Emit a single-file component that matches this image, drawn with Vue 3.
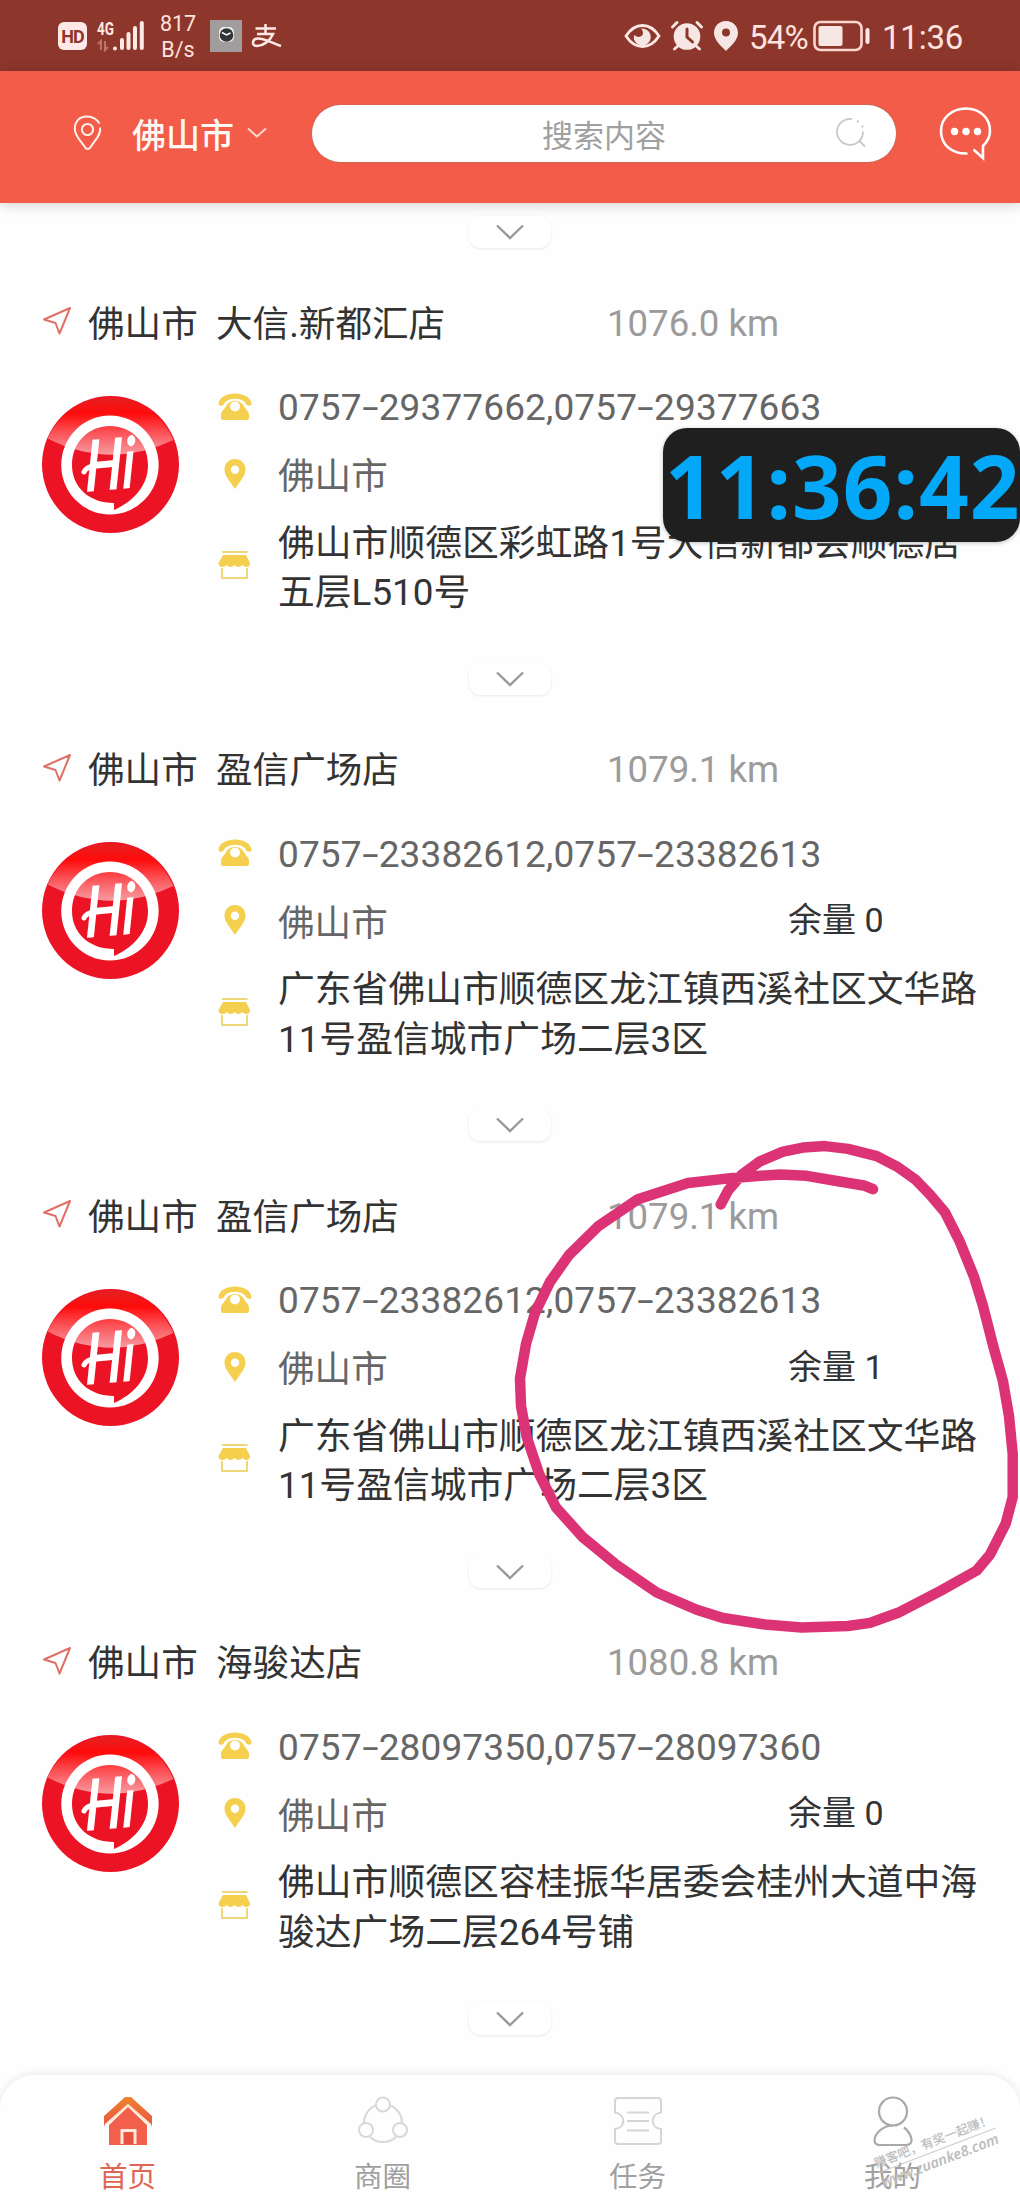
<script setup>
const stores = [
  { name: '大信.新都汇店', distance: '1076.0 km', phone: '0757-29377662,0757-29377663', stock: null, address: ['佛山市顺德区彩虹路1号大信新都会顺德店', '五层L510号'] },
  { name: '盈信广场店', distance: '1079.1 km', phone: '0757-23382612,0757-23382613', stock: 0, address: ['广东省佛山市顺德区龙江镇西溪社区文华路', '11号盈信城市广场二层3区'] },
  { name: '盈信广场店', distance: '1079.1 km', phone: '0757-23382612,0757-23382613', stock: 1, address: ['广东省佛山市顺德区龙江镇西溪社区文华路', '11号盈信城市广场二层3区'] },
  { name: '海骏达店', distance: '1080.8 km', phone: '0757-28097350,0757-28097360', stock: 0, address: ['佛山市顺德区容桂振华居委会桂州大道中海', '骏达广场二层264号铺'] },
]
const phoneParts = (phone) => phone.split(/(-)/)
</script>

<template>
  <div class="screen">
    <div class="status">
      <div class="status-left">
        <span class="hd">HD</span>
        <svg class="signal" width="50" height="32" viewBox="0 0 50 32">
          <text x="0" y="15" font-size="18" font-weight="700" textLength="17" lengthAdjust="spacingAndGlyphs" fill="#ffe9e6">4G</text>
          <path d="M4 30V21L1 24M8 21V30L11 27" stroke="#b9756c" stroke-width="2" fill="none" />
          <path d="M18 28.5v0M25 28V20M31.5 28V14M38 28V8M44.800 28V3" stroke="#ffe9e6" stroke-width="4" stroke-linecap="round" />
        </svg>
        <span class="speed"><span>817</span><span>B/s</span></span>
        <svg class="app-icon" width="32" height="32" viewBox="0 0 32 32">
          <rect width="32" height="32" fill="#a09d9c" />
          <rect x="9" y="7" width="15" height="15" rx="5" fill="#eee" />
          <circle cx="16.500" cy="15" r="6.800" fill="#303436" />
          <path d="M12 12.500l4.500 2.500 4-2" stroke="#fff" stroke-width="1.500" fill="none" />
        </svg>
        <svg class="pay-icon" width="32" height="26" viewBox="0 0 32 26" fill="none" stroke="#ffe9e6" stroke-width="2.500">
          <path d="M4.500 5.500H25M14.500 1V11M6 11H22C19 18 12 23 6 23C0 23 1 15.500 7 15.500C14 15.500 21 20 30 23" />
        </svg>
      </div>
      <div class="status-right">
        <svg width="37" height="28" viewBox="0 0 37 28">
          <path d="M2 14C11 0 26 0 35 14C26 28 11 28 2 14Z" fill="none" stroke="#ffe9e6" stroke-width="2.800" />
          <path d="M18 6.500A8.500 8.500 0 1 1 10 13Q15 17 18.500 13Q20 9.500 17 6.500Z" fill="#f6e7e5" />
        </svg>
        <svg class="alarm" width="32" height="30" viewBox="0 0 32 30">
          <circle cx="16" cy="15.500" r="13.300" fill="#f6e7e5" />
          <path d="M1.500 6L6 1.500M30.500 6L26 1.500M3.500 28L8 24M28.500 28L24 24" stroke="#f6e7e5" stroke-width="3" stroke-linecap="round" />
          <path d="M16 8V16L21.500 21" fill="none" stroke="#8d362b" stroke-width="3" stroke-linecap="round" />
        </svg>
        <svg class="gps" width="24" height="30" viewBox="0 0 24 30">
          <path fill-rule="evenodd" d="M12 0C5 0 0 5 0 12C0 19 7 25 12 30C17 25 24 19 24 12C24 5 19 0 12 0ZM12 7.500A4 4 0 1 1 12 15.500A4 4 0 0 1 12 7.500Z" fill="#f6e7e5" />
        </svg>
        <span class="percent">54%</span>
        <svg class="battery" width="57" height="32" viewBox="0 0 57 32">
          <rect x="1.500" y="2" width="47" height="28" rx="6" fill="none" stroke="#ffd5cf" stroke-width="2.600" />
          <rect x="5.500" y="6" width="24" height="20" rx="2" fill="#f6e7e5" />
          <rect x="52.500" y="8" width="4" height="16" rx="2" fill="#ffe9e6" />
        </svg>
        <span class="time">11:36</span>
      </div>
    </div>

    <header class="header">
      <svg class="head-pin" width="30" height="36" viewBox="0 0 30 36" fill="none" stroke="#fff0ea" stroke-width="2">
        <path d="M26.500 8.500C21 -1 6 -1 2.500 9C-1 19 9 27 12.500 33Q14.500 35 17 33C20 27 29 20 27 12.500" />
        <circle cx="14.500" cy="14.500" r="5.600" />
      </svg>
      <span class="head-city">佛山市</span>
      <svg class="head-arrow" width="20" height="12" viewBox="0 0 20 12"><path d="M1 1.500L10 9.500L19 1.500" fill="none" stroke="#fbd9d0" stroke-width="2" /></svg>
      <div class="search">
        <span>搜索内容</span>
        <svg width="32" height="32" viewBox="0 0 32 32" fill="none" stroke="#c8c8c8" stroke-width="1.800">
          <path d="M17 2A13 13 0 1 0 28 14.500M24.500 24L30 29.500" />
          <path d="M22 4.500h2M26.500 9.500h2" />
        </svg>
      </div>
      <svg class="chat" width="54" height="54" viewBox="0 0 54 54">
        <path d="M28.500 47.500C13 48 2 39 2 25C2 12 13 2.500 27 2.500C41 2.500 51 12 51 25C51 32 48 36 44 40V52L34.500 43.500" fill="none" stroke="#fff" stroke-width="2.600" />
        <circle cx="15.500" cy="25.500" r="3.700" fill="#fff" /><circle cx="27" cy="25.500" r="3.700" fill="#fff" /><circle cx="38.500" cy="25.500" r="3.700" fill="#fff" />
      </svg>
    </header>

    <main class="list">
      <div class="pill"><svg width="30" height="16" viewBox="0 0 30 16"><path d="M2 1.500L15 14L28 1.500" fill="none" stroke="#999" stroke-width="2.400" /></svg></div>
      <section v-for="(store, i) in stores" :key="i" class="card">
        <div class="title">
          <svg width="30" height="30" viewBox="0 0 30 30"><path d="M2 13.500L28 2L17.500 27.500L13.500 17Z" fill="none" stroke="#df7065" stroke-width="2" stroke-linejoin="round" /></svg>
          <span class="city">佛山市</span>
          <span class="name">{{ store.name }}</span>
          <span class="distance">{{ store.distance }}</span>
        </div>
        <div class="body">
          <svg class="logo" width="137" height="137" viewBox="0 0 137 137">
            <defs>
              <linearGradient :id="'gloss' + i" x1="0" y1="0" x2="0" y2="1">
                <stop offset="0" stop-color="#e52020" /><stop offset="0.280" stop-color="#ff0b0b" /><stop offset="0.600" stop-color="#fb5055" /><stop offset="1" stop-color="#f79aa0" />
              </linearGradient>
            </defs>
            <circle cx="68.500" cy="68.500" r="68.500" fill="#ec1325" />
            <path d="M5.500 42.500A68.500 68.500 0 0 1 131.500 44Q68 74 5.500 42.500Z" :fill="`url(#gloss${i})`" />
            <path fill-rule="evenodd" fill="#fff" d="M68 19.500A48.700 49.500 0 1 1 67.900 118.500A48.700 49.500 0 1 1 68 19.500ZM68 30C47 30 30 46 30 69C30 91 47 107 72 107L72 114C90 106 106 91 106 69C106 46 89 30 68 30Z" />
            <text class="hi" transform="translate(43 96) rotate(-5) skewX(-6)" textLength="50" lengthAdjust="spacingAndGlyphs">Hi</text>
            <path d="M42 76Q44 71 54 69" fill="none" stroke="#fff" stroke-width="5" stroke-linecap="round" />
          </svg>
          <div class="info">
            <div class="row">
              <svg class="ico" width="34" height="28" viewBox="0 0 34 28" fill="#f5d04f">
                <path d="M.5 11C1 4 9 .5 17 .5S33 4 33.500 11C33 14 27.500 13 27 9C22 4.500 12 4.500 7 9C6.500 13 1 14 .5 11Z" />
                <path fill-rule="evenodd" d="M9 11.500Q17 4 25 11.500C27 16 31 18 31 22V25Q31 27 29 27H5Q3 27 3 25V22C3 18 7 16 9 11.500ZM17 8.500A5 5 0 1 0 17 18.500A5 5 0 0 0 17 8.500Z" />
              </svg>
              <span class="phone"><span v-for="(part, p) in phoneParts(store.phone)" :key="p" :class="{ dash: part === '-' }">{{ part }}</span></span>
            </div>
            <div class="row">
              <svg class="ico" width="34" height="30" viewBox="0 0 34 30"><path fill-rule="evenodd" d="M17 0C11 0 6.500 4.500 6.500 10.500C6.500 17 12 22 17 30C22 22 27.500 17 27.500 10.500C27.500 4.500 23 0 17 0ZM17 6.500A4.200 4.200 0 1 1 17 14.900A4.200 4.200 0 0 1 17 6.500Z" fill="#f5d04f" /></svg>
              <span class="area">佛山市</span>
              <span v-if="store.stock !== null" class="stock">余量 {{ store.stock }}</span>
            </div>
            <div class="row address">
              <svg class="ico shop" width="34" height="28" viewBox="0 0 34 28">
                <path d="M4 1H29.500" stroke="#efd778" stroke-width="2" />
                <path d="M5 4H28L32 12Q32 16 28.500 16Q25.500 16 24.500 14Q20.500 18 16.500 14Q12.500 18 8.500 14Q7.500 16 4.500 16Q.5 16 .5 12Z" fill="#f5d04f" />
                <path d="M4 17V27H29V17" fill="none" stroke="#efd778" stroke-width="2" />
              </svg>
              <div class="lines"><div v-for="line in store.address" :key="line">{{ line }}</div></div>
            </div>
          </div>
        </div>
        <div class="pill"><svg width="30" height="16" viewBox="0 0 30 16"><path d="M2 1.500L15 14L28 1.500" fill="none" stroke="#999" stroke-width="2.400" /></svg></div>
      </section>
    </main>

    <nav class="tabs">
      <div class="tab active">
        <svg width="50" height="50" viewBox="0 0 50 50">
          <defs><linearGradient id="roof" x1="0" y1="0" x2="0" y2="1"><stop offset="0" stop-color="#ee8430" /><stop offset="1" stop-color="#e55543" /></linearGradient></defs>
          <path d="M22 1H28L49 20V30L25 9L1 30V20Z" fill="url(#roof)" />
          <path d="M6 29L25 11L44 29V49H6Z" fill="#f2604b" />
          <path d="M2 29L25 9L48 29" fill="none" stroke="#ffe2ca" stroke-width="1.800" />
          <path d="M19 48V34.500H32V48" fill="#e9513f" stroke="#ffe9dc" stroke-width="3" />
        </svg>
        <span>首页</span>
      </div>
      <div class="tab">
        <svg width="50" height="50" viewBox="0 0 50 50" fill="none" stroke="#d8d8d8" stroke-width="2">
          <circle cx="25" cy="27" r="19" />
          <g fill="#fefefe"><circle cx="25" cy="8.500" r="7" /><circle cx="8" cy="34" r="7" /><circle cx="42" cy="34" r="7" /></g>
        </svg>
        <span>商圈</span>
      </div>
      <div class="tab">
        <svg width="50" height="50" viewBox="0 0 50 50" fill="none" stroke="#d5d5d5" stroke-width="2">
          <path d="M5 2H45Q48 2 48 5V16.500C37 18 37 32 48 33V45Q48 48 45 48H5Q2 48 2 45V33C13 32 13 18 2 16.500V5Q2 2 5 2Z" />
          <path d="M14 16.500H36M14 25H36M14 34.500H36" />
        </svg>
        <span>任务</span>
      </div>
      <div class="tab mine">
        <svg width="50" height="50" viewBox="0 0 50 50" fill="none" stroke="#a9a9a9" stroke-width="2.200">
          <circle cx="25" cy="15.500" r="14" />
          <path d="M25 29.500C14 29.500 7 38 6.500 44Q6.500 49 12 49H38Q44 49 43.500 43Q42 36 36 31.500" />
        </svg>
        <span>我的</span>
      </div>
    </nav>

    <div class="clock">11:36:42</div>
    <svg class="scribble" width="1020" height="2210" viewBox="0 0 1020 2210">
      <path d="M720.700 1204.400L728.300 1190.300L741.700 1174.800L760 1161.300L783 1151.700L803 1147.600L825 1146.100L848 1148.900L876.700 1156.200L898 1167.200L915 1179.200L930 1194.700L945 1212.300L959.300 1240.600L974 1276.700L983 1306L993 1345.200L1003 1381.400L1009 1416.200L1012.700 1453.700V1497.100L1005.700 1523.700L990 1554.700L976.700 1570.500L940 1591.100L898 1612.800L870 1622.900L848 1626L801.700 1627.600L765 1624.500L723 1618L696.700 1609.700L656.700 1592.500L616.700 1565L583 1537.400L556 1507.500L539.300 1474.400L526.700 1436.900L521 1405.900L520 1378.300L526 1343.900L535 1312.900L550 1281.900L569 1255L598 1226.400L638 1199.200L688 1183L733 1177.900L780 1174.400L806.700 1175.800L836.700 1181L865 1185.800L873 1189.200" />
    </svg>
    <div class="watermark"><div class="slogan">赚客吧，有奖一起赚！</div><div class="site">www.zuanke8.com</div></div>
  </div>
</template>

<style>
body { background: #fefefe; }
</style>

<style scoped>
.screen { position: relative; width: 1020px; height: 2210px; overflow: hidden; background: #fefefe; font-family: Roboto, "Noto Sans CJK SC", sans-serif; color: #333; display: flex; flex-direction: column; white-space: nowrap; }
svg { display: block; flex: none; overflow: visible; }
.status { height: 71px; flex: none; background: #8d362b; color: #ffe3df; display: flex; justify-content: space-between; align-items: center; }
.status-left, .status-right { display: flex; align-items: center; }
.status-left { padding-left: 58px; }
.hd { width: 29px; height: 28px; border-radius: 6px; background: #ffe9e6; color: #8d362b; font-size: 18px; line-height: 29px; font-weight: 700; text-align: center; letter-spacing: -1px; }
.signal { margin-left: 10px; }
.speed { width: 50px; margin-left: 6px; display: flex; flex-direction: column; align-items: center; font-size: 21.500px; line-height: 26px; padding-top: 3px; }
.app-icon { margin-left: 7px; }
.pay-icon { margin-left: 9px; }
.status-right { width: 396px; }
.alarm { margin-left: 10px; }
.gps { margin-left: 11px; }
.percent { width: 59px; margin-left: 11px; font-size: 33px; letter-spacing: -.8px; padding-top: 3px; }
.battery { margin-left: 5px; }
.time { margin-left: 12px; font-size: 33px; padding-top: 3px; letter-spacing: -.2px; }
.header { height: 132px; box-sizing: border-box; padding-bottom: 8px; flex: none; background: #f25c48; display: flex; align-items: center; box-shadow: 0 2px 12px rgba(0, 0, 0, .18); position: relative; z-index: 1; }
.head-pin { margin-left: 73px; }
.head-city { width: 103px; margin-left: 29px; font-size: 34px; color: #fff8f3; font-weight: 500; }
.head-arrow { margin-left: 12px; }
.search { width: 584px; height: 57px; margin-left: 45px; border-radius: 29px; background: #fff; display: flex; align-items: center; justify-content: center; position: relative; color: #a0a0a0; font-size: 31px; box-shadow: 0 0 2px #9a7770; }
.search svg { position: absolute; right: 29px; top: 12px; }
.chat { margin-left: 43px; }
.list { flex: none; padding-top: 13px; }
.pill { width: 82px; height: 32px; margin: 0 auto; border-radius: 12px; background: #fff; box-shadow: 0 1px 3px rgba(0, 0, 0, .09); display: flex; align-items: center; justify-content: center; }
.card { height: 446.670px; box-sizing: border-box; padding: 48px 0 0 42px; display: flex; flex-direction: column; }
.title { height: 50px; flex: none; display: flex; align-items: center; font-size: 36.600px; }
.city { width: 128px; margin-left: 16px; }
.name { width: 391px; }
.distance { color: #9b9b9b; padding-top: 4px; }
.body { display: flex; margin-top: 27px; }
.logo { margin-top: 22.500px; }
.hi { font-family: Lato, sans-serif; font-style: italic; font-weight: 700; font-size: 71px; fill: #fff; }
.info { margin-left: 39px; }
.row { height: 67px; display: flex; align-items: center; font-size: 36.800px; color: #666; }
.phone, .area, .lines { margin-left: 26px; }
.phone { font-size: 37px; display: flex; letter-spacing: .12px; padding-top: 2px; }
.dash { width: 17px; transform: scaleX(1.600); text-align: center; }
.area { width: 510px; font-size: 36.600px; }
.stock { font-size: 34px; color: #333; margin: -5px 0 0 0; }
.address { height: 99px; margin-top: 10px; color: #333; }
.shop { margin-top: -3px; }
.lines { line-height: 49.500px; padding-top: 3px; }
.card > .pill { margin: auto auto 0; transform: translateX(-21px); }
.tabs { position: absolute; left: 0; right: 0; bottom: 0; height: 135px; background: #fefefe; border-radius: 34px 34px 0 0; box-shadow: 0 -1px 8px rgba(0, 0, 0, .09); display: flex; }
.tab { flex: 1; display: flex; flex-direction: column; align-items: center; padding-top: 21px; color: #a0a0a0; font-size: 28.500px; line-height: 40px; }
.tab span { margin-top: 12px; }
.active { color: #df6554; }
.clock { position: absolute; left: 663px; top: 428px; width: 357px; height: 114px; border-radius: 24px; background: #1f1f1f; color: #03a9f8; font: 700 87px/115px "Noto Sans", sans-serif; letter-spacing: 1px; text-indent: 2px; box-shadow: 0 1px 4px rgba(0, 0, 0, .25); }
.scribble { position: absolute; left: 0; top: 0; pointer-events: none; }
.scribble path { fill: none; stroke: #dc3276; stroke-width: 10.500; stroke-linecap: round; stroke-linejoin: round; }
.watermark { position: absolute; left: 874px; top: 2132px; width: 126px; transform: rotate(-21deg); color: #bdbdbd; font-family: "Noto Sans", "Noto Sans CJK SC", sans-serif; font-weight: 500; }
.slogan { font-size: 12.500px; line-height: 18px; border-bottom: 1px solid #ccc; }
.site { font-size: 14.500px; line-height: 18px; font-style: italic; font-weight: 600; }
</style>
